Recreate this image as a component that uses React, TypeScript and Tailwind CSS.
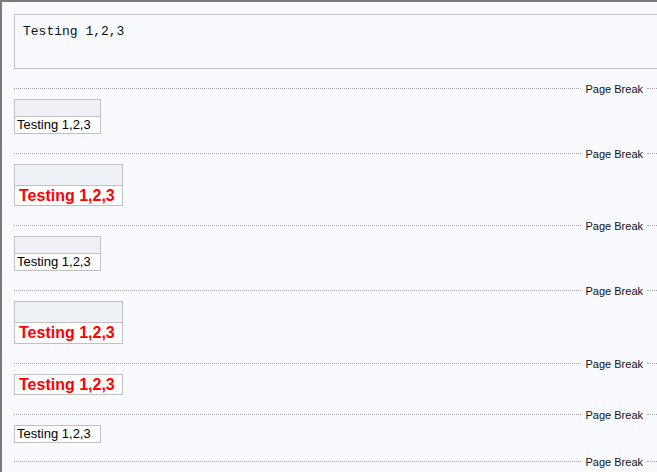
import React from 'react';

const sans = { fontFamily: '"Liberation Sans", Arial, sans-serif' };

function PageBreak({ tight = false }: { tight?: boolean }) {
  return (
    <div className={tight ? 'mt-[9px] h-[20px] w-[647px]' : 'mt-[10px] h-[20px] w-[647px]'} style={sans}>
      <div className="mt-[9px] flex w-full items-center">
        <div className="flex-1 border-t border-dotted border-[#a3a3a3]" />
        <span className="mx-[5px] mr-[4px] -my-[6px] text-[11px] leading-[12px] text-[#111]">Page Break</span>
        <div className="w-[14px] border-t border-dotted border-[#a3a3a3]" />
      </div>
    </div>
  );
}

function SmallTable({ header = true }: { header?: boolean }) {
  return (
    <div className="w-[87px] border border-[#c0c0c0]" style={sans}>
      {header && <div className="h-[17px] border-b border-[#c0c0c0] bg-[#eef2f7]" />}
      <div className="h-[16px] bg-white pl-[2px] text-[13px] leading-[16px] text-black">Testing 1,2,3</div>
    </div>
  );
}

function BigTable({ header = true, tall = false }: { header?: boolean; tall?: boolean }) {
  return (
    <div className="w-[109px] border border-[#c0c0c0]" style={sans}>
      {header && <div className="h-[21px] border-b border-[#c0c0c0] bg-[#eef2f7]" />}
      <div
        className={
          tall
            ? 'h-[20px] bg-white pl-[4px] text-[16px] font-bold leading-[20px] text-[#ff0000]'
            : 'h-[19px] bg-white pl-[4px] text-[16px] font-bold leading-[19px] text-[#ff0000]'
        }
      >
        Testing 1,2,3
      </div>
    </div>
  );
}

export default function App() {
  return (
    <div className="h-[472px] w-[657px] overflow-hidden border-l-2 border-t-2 border-[#7a7a7a] bg-[#f8faff] pl-[12px] pt-[12px]">
      <div className="flex flex-col">
        <div
          className="h-[55px] w-[700px] border border-[#c0c0c0] px-[8px] pb-[8px] pt-[9px] text-[13px] leading-[15px] text-[#111]"
          style={{ fontFamily: '"Liberation Mono", "Courier New", monospace' }}
        >
          Testing 1,2,3
        </div>
        <PageBreak />
        <SmallTable />
        <PageBreak />
        <BigTable />
        <PageBreak />
        <SmallTable />
        <PageBreak />
        <BigTable tall />
        <PageBreak />
        <BigTable header={false} />
        <PageBreak />
        <SmallTable header={false} />
        <PageBreak tight />
      </div>
    </div>
  );
}
